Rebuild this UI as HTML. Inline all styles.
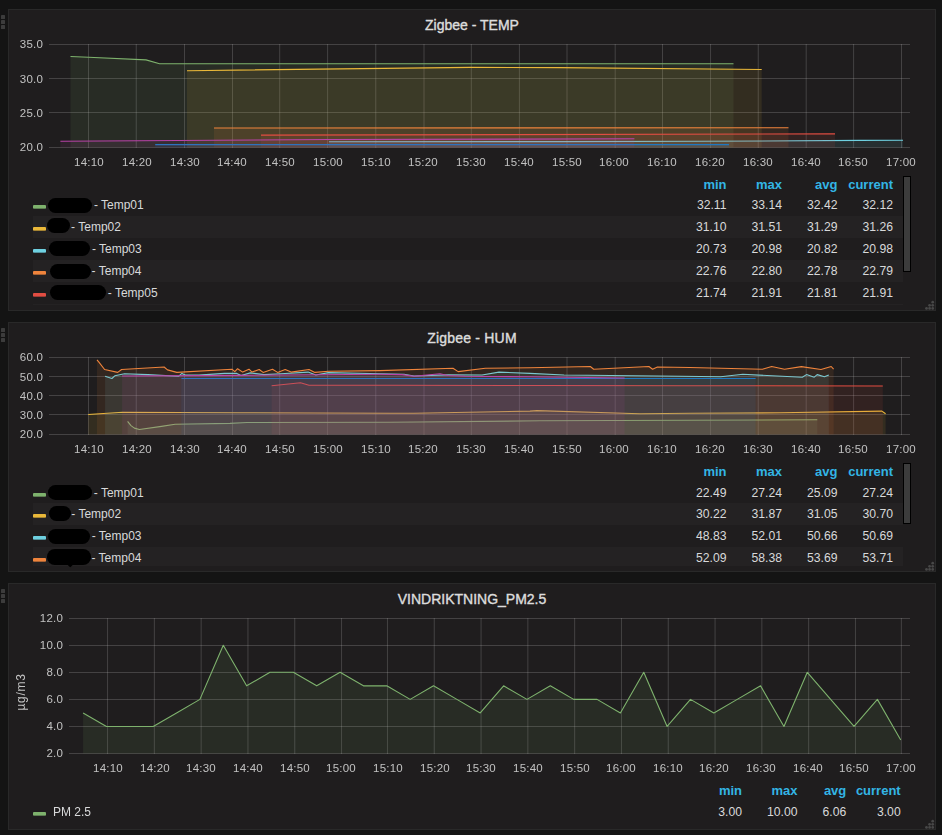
<!DOCTYPE html>
<html lang="en"><head><meta charset="utf-8"><title>Zigbee dashboard</title>
<style>
html,body{margin:0;padding:0}
body{width:942px;height:835px;background:#141414;position:relative;overflow:hidden;
 font-family:"Liberation Sans",sans-serif;color:#d8d9da}
div{position:absolute;box-sizing:border-box;white-space:nowrap}
svg{position:absolute;left:0;top:0}
.panel{left:8px;width:928px;background:#1f1d1e;border:1px solid #292929}
.dot{left:1px;width:4px;height:4px;background:#3c3c3c;border-radius:0.6px}
.title{left:8px;width:928px;text-align:center;font-size:14px;line-height:20px;color:#dcdcdc;-webkit-text-stroke:0.4px #dcdcdc}
.tick{font-size:11.5px;line-height:13px;color:#c2c2c2;width:60px;will-change:transform;letter-spacing:0.2px}
.xt{text-align:center}
.yt{text-align:right}
.ylab{width:100px;height:16px;line-height:16px;text-align:center;font-size:12px;letter-spacing:0.7px;color:#c2c2c2;transform:rotate(-90deg)}
.lh{width:80px;text-align:right;font-size:13px;line-height:20px;font-weight:bold;color:#33b5e5}
.lv{width:80px;text-align:right;font-size:12.2px;line-height:20px}
.lt{font-size:12px;line-height:20px}
.sw{left:33px;width:13px;height:4px;border-radius:1px}
.blob{background:#000}
.stripe{left:33px;background:#242223}
.sb{left:903px;width:8px;background:#3c3c3c;border:1px solid #000}
</style></head>
<body>
<div class="panel" style="top:9px;height:302px"></div>
<div class="panel" style="top:322px;height:250px"></div>
<div class="panel" style="top:583px;height:247px"></div>
<svg width="942" height="835" viewBox="0 0 942 835">
<path d="M49 44.5H910M49 78.5H910M49 112.5H910M49 147.5H910M88.5 44V148M136.25 44V148M184.5 44V148M232.5 44V148M279.7 44V148M327.6 44V148M375.75 44V148M424 44V148M471.3 44V148M519.4 44V148M567 44V148M615.2 44V148M662.5 44V148M710.55 44V148M758.25 44V148M806.2 44V148M853.6 44V148M901.5 44V148" stroke="rgba(200,200,200,0.22)" stroke-width="1" fill="none"/>
<polygon points="70.5,147.5 70.5,56.5 88.5,57.3 146,59.9 159.6,63.8 733.5,63.8 733.5,147.5" fill="#7EB26D" fill-opacity="0.1"/>
<polyline points="70.5,56.5 88.5,57.3 146,59.9 159.6,63.8 733.5,63.8" fill="none" stroke="#7EB26D" stroke-width="1.1" stroke-linejoin="round"/>
<polygon points="187,147.5 187,70.7 470,67.4 560,67.6 761.7,69.5 761.7,147.5" fill="#EAB839" fill-opacity="0.1"/>
<polyline points="187,70.7 470,67.4 560,67.6 761.7,69.5" fill="none" stroke="#EAB839" stroke-width="1.1" stroke-linejoin="round"/>
<polygon points="329,147.5 329,141.8 560,141.6 700,141.3 860,140.4 903,140.2 903,147.5" fill="#6ED0E0" fill-opacity="0.1"/>
<polyline points="329,141.8 560,141.6 700,141.3 860,140.4 903,140.2" fill="none" stroke="#6ED0E0" stroke-width="1.1" stroke-linejoin="round"/>
<polygon points="214,147.5 214,128 788.5,127.8 788.5,147.5" fill="#EF843C" fill-opacity="0.1"/>
<polyline points="214,128 788.5,127.8" fill="none" stroke="#EF843C" stroke-width="1.1" stroke-linejoin="round"/>
<polygon points="261,147.5 261,135.1 835,133.9 835,147.5" fill="#E24D42" fill-opacity="0.1"/>
<polyline points="261,135.1 835,133.9" fill="none" stroke="#E24D42" stroke-width="1.1" stroke-linejoin="round"/>
<polygon points="155.2,147.5 155.2,144.6 729,144.6 729,147.5" fill="#1F78C1" fill-opacity="0.1"/>
<polyline points="155.2,144.6 729,144.6" fill="none" stroke="#1F78C1" stroke-width="1.1" stroke-linejoin="round"/>
<polygon points="60.4,147.5 60.4,141.3 330,139.5 634.4,138.8 634.4,147.5" fill="#BA43A9" fill-opacity="0.1"/>
<polyline points="60.4,141.3 330,139.5 634.4,138.8" fill="none" stroke="#BA43A9" stroke-width="1.1" stroke-linejoin="round"/>
<path d="M49 357.5H910M49 376.5H910M49 395.5H910M49 414.5H910M49 434.5H910M88.5 357V435M136.25 357V435M184.5 357V435M232.5 357V435M279.7 357V435M327.6 357V435M375.75 357V435M424 357V435M471.3 357V435M519.4 357V435M567 357V435M615.2 357V435M662.5 357V435M710.55 357V435M758.25 357V435M806.2 357V435M853.6 357V435M901.5 357V435" stroke="rgba(200,200,200,0.22)" stroke-width="1" fill="none"/>
<polygon points="127.6,434.5 127.6,421.3 131,425.6 134.4,428.1 139.4,429.5 161.5,426.4 175.1,424.2 230,423.4 247,422.5 390,422.2 540,420.8 690,420.3 817.3,419.8 817.3,434.5" fill="#7EB26D" fill-opacity="0.1"/>
<polyline points="127.6,421.3 131,425.6 134.4,428.1 139.4,429.5 161.5,426.4 175.1,424.2 230,423.4 247,422.5 390,422.2 540,420.8 690,420.3 817.3,419.8" fill="none" stroke="#7EB26D" stroke-width="1.1" stroke-linejoin="round"/>
<polygon points="88.2,434.5 88.2,414.5 122.5,412.3 240,412.7 390,413.3 414,413.3 530,411.1 537,410.6 640,413.7 690,413.3 780,412.8 881.9,411.1 885.6,413.7 885.6,434.5" fill="#EAB839" fill-opacity="0.1"/>
<polyline points="88.2,414.5 122.5,412.3 240,412.7 390,413.3 414,413.3 530,411.1 537,410.6 640,413.7 690,413.3 780,412.8 881.9,411.1 885.6,413.7" fill="none" stroke="#EAB839" stroke-width="1.1" stroke-linejoin="round"/>
<polygon points="105.1,434.5 105.1,376.3 111.9,378.5 114.8,375.8 124.5,373.8 147.9,374.6 178.5,376.3 181.9,373.4 185.3,375.1 198.9,375.1 224.4,373.4 236.8,373.4 241,375.5 250.4,372.9 264,374.6 281,373.8 308.1,372.1 315.8,375 328.5,372.6 380,373.7 404,374.3 414,376 448,374.9 482,375 499,372.1 530,373.4 564,375 680,376.3 720.8,376.7 742.8,374.3 802.3,377.2 806.5,374.6 814.2,377.2 817.2,374.6 824.4,376.8 828.8,375 828.8,434.5" fill="#6ED0E0" fill-opacity="0.1"/>
<polyline points="105.1,376.3 111.9,378.5 114.8,375.8 124.5,373.8 147.9,374.6 178.5,376.3 181.9,373.4 185.3,375.1 198.9,375.1 224.4,373.4 236.8,373.4 241,375.5 250.4,372.9 264,374.6 281,373.8 308.1,372.1 315.8,375 328.5,372.6 380,373.7 404,374.3 414,376 448,374.9 482,375 499,372.1 530,373.4 564,375 680,376.3 720.8,376.7 742.8,374.3 802.3,377.2 806.5,374.6 814.2,377.2 817.2,374.6 824.4,376.8 828.8,375" fill="none" stroke="#6ED0E0" stroke-width="1.1" stroke-linejoin="round"/>
<polygon points="97,434.5 97,359.9 98.7,361.9 104.6,369.5 117.7,372.4 121.6,369.5 164.1,367 167.5,369.9 176.8,372.4 232,369.2 234.8,371.7 237.6,368.7 242.7,372.1 249,369.2 252,372.1 259.2,369.5 263.1,372.4 272.5,369.2 277.6,372.4 285.2,369.5 291.1,372.1 309,369.5 314.9,372.4 328.5,371.2 380,370.6 453,368.2 458.1,371.6 485.3,368.3 530,367.8 590.3,366.5 593.7,369.2 648.9,366.5 652.6,369.2 657.4,367 690,367.5 762.4,369.2 771.7,366.5 784.5,369.2 801.4,366.6 821,369.5 831.2,366.5 833.6,369.2 833.6,434.5" fill="#EF843C" fill-opacity="0.1"/>
<polyline points="97,359.9 98.7,361.9 104.6,369.5 117.7,372.4 121.6,369.5 164.1,367 167.5,369.9 176.8,372.4 232,369.2 234.8,371.7 237.6,368.7 242.7,372.1 249,369.2 252,372.1 259.2,369.5 263.1,372.4 272.5,369.2 277.6,372.4 285.2,369.5 291.1,372.1 309,369.5 314.9,372.4 328.5,371.2 380,370.6 453,368.2 458.1,371.6 485.3,368.3 530,367.8 590.3,366.5 593.7,369.2 648.9,366.5 652.6,369.2 657.4,367 690,367.5 762.4,369.2 771.7,366.5 784.5,369.2 801.4,366.6 821,369.5 831.2,366.5 833.6,369.2" fill="none" stroke="#EF843C" stroke-width="1.1" stroke-linejoin="round"/>
<polygon points="271.6,434.5 271.6,385.7 300.5,382.8 309,385.3 390,385.3 540,385.5 690,385.7 882.8,386 882.8,434.5" fill="#E24D42" fill-opacity="0.1"/>
<polyline points="271.6,385.7 300.5,382.8 309,385.3 390,385.3 540,385.5 690,385.7 882.8,386" fill="none" stroke="#E24D42" stroke-width="1.1" stroke-linejoin="round"/>
<polygon points="181.4,434.5 181.4,378.5 755.6,378.5 755.6,434.5" fill="#1F78C1" fill-opacity="0.1"/>
<polyline points="181.4,378.5 755.6,378.5" fill="none" stroke="#1F78C1" stroke-width="1.1" stroke-linejoin="round"/>
<polygon points="122.1,434.5 122.1,376 240,375.4 380,374.3 402,374.6 414,376.3 440,373.8 448,375.5 465,376.3 530,376.8 624.6,378 624.6,434.5" fill="#BA43A9" fill-opacity="0.1"/>
<polyline points="122.1,376 240,375.4 380,374.3 402,374.6 414,376.3 440,373.8 448,375.5 465,376.3 530,376.8 624.6,378" fill="none" stroke="#BA43A9" stroke-width="1.1" stroke-linejoin="round"/>
<path d="M69 618.5H910M69 645.5H910M69 672.5H910M69 699.5H910M69 726.5H910M69 753.5H910M107.55 618V754M154.35 618V754M201.15 618V754M247.95 618V754M294.75 618V754M341.55 618V754M387.45 618V754M434.25 618V754M481.05 618V754M527.85 618V754M574.65 618V754M621.45 618V754M668.25 618V754M715.05 618V754M761.85 618V754M808.65 618V754M855.45 618V754M901.35 618V754" stroke="rgba(200,200,200,0.22)" stroke-width="1" fill="none"/>
<polygon points="83.1,753.5 83.1,712.91 106.46,726.44 129.82,726.44 153.18,726.44 176.54,712.91 199.91,699.38 223.27,645.26 246.63,685.85 269.99,672.32 293.35,672.32 316.71,685.85 340.07,672.32 363.43,685.85 386.79,685.85 410.16,699.38 433.52,685.85 456.88,699.38 480.24,712.91 503.6,685.85 526.96,699.38 550.32,685.85 573.68,699.38 597.04,699.38 620.41,712.91 643.77,672.32 667.13,726.44 690.49,699.38 713.85,712.91 737.21,699.38 760.57,685.85 783.93,726.44 807.29,672.32 830.66,699.38 854.02,726.44 877.38,699.38 900.74,739.97 900.74,753.5" fill="#7EB26D" fill-opacity="0.1"/>
<polyline points="83.1,712.91 106.46,726.44 129.82,726.44 153.18,726.44 176.54,712.91 199.91,699.38 223.27,645.26 246.63,685.85 269.99,672.32 293.35,672.32 316.71,685.85 340.07,672.32 363.43,685.85 386.79,685.85 410.16,699.38 433.52,685.85 456.88,699.38 480.24,712.91 503.6,685.85 526.96,699.38 550.32,685.85 573.68,699.38 597.04,699.38 620.41,712.91 643.77,672.32 667.13,726.44 690.49,699.38 713.85,712.91 737.21,699.38 760.57,685.85 783.93,726.44 807.29,672.32 830.66,699.38 854.02,726.44 877.38,699.38 900.74,739.97" fill="none" stroke="#7EB26D" stroke-width="1.1" stroke-linejoin="round"/>
</svg>
<div class="dot" style="top:15px"></div>
<div class="dot" style="top:20px"></div>
<div class="dot" style="top:25px"></div>
<div class="title" style="top:15px;letter-spacing:0px">Zigbee - TEMP</div>
<div class="tick xt" style="left:59.1px;top:156px">14:10</div>
<div class="tick xt" style="left:106.86px;top:156px">14:20</div>
<div class="tick xt" style="left:154.62px;top:156px">14:30</div>
<div class="tick xt" style="left:202.38px;top:156px">14:40</div>
<div class="tick xt" style="left:250.14px;top:156px">14:50</div>
<div class="tick xt" style="left:297.9px;top:156px">15:00</div>
<div class="tick xt" style="left:345.66px;top:156px">15:10</div>
<div class="tick xt" style="left:393.42px;top:156px">15:20</div>
<div class="tick xt" style="left:441.18px;top:156px">15:30</div>
<div class="tick xt" style="left:488.94px;top:156px">15:40</div>
<div class="tick xt" style="left:536.7px;top:156px">15:50</div>
<div class="tick xt" style="left:584.46px;top:156px">16:00</div>
<div class="tick xt" style="left:632.22px;top:156px">16:10</div>
<div class="tick xt" style="left:679.98px;top:156px">16:20</div>
<div class="tick xt" style="left:727.74px;top:156px">16:30</div>
<div class="tick xt" style="left:775.5px;top:156px">16:40</div>
<div class="tick xt" style="left:823.26px;top:156px">16:50</div>
<div class="tick xt" style="left:871.02px;top:156px">17:00</div>
<div class="tick yt" style="left:-17px;top:37.5px">35.0</div>
<div class="tick yt" style="left:-17px;top:72.5px">30.0</div>
<div class="tick yt" style="left:-17px;top:106.5px">25.0</div>
<div class="tick yt" style="left:-17px;top:140.5px">20.0</div>
<div class="lh" style="left:646.5px;top:174.5px">min</div>
<div class="lh" style="left:702px;top:174.5px">max</div>
<div class="lh" style="left:757.5px;top:174.5px">avg</div>
<div class="lh" style="left:813px;top:174.5px">current</div>
<div class="sw" style="top:205px;background:linear-gradient(to bottom,#7EB26D 0,#7EB26D 3px,#7EB26Da6 3px,#7EB26Da6 4px)"></div>
<div class="blob" style="left:47.9px;top:197.9px;width:44px;height:14.9px;border-radius:7.45px"></div>
<div class="lt" style="left:93.9px;top:195px">- Temp01</div>
<div class="lv" style="left:646.5px;top:195px">32.11</div>
<div class="lv" style="left:702px;top:195px">33.14</div>
<div class="lv" style="left:757.5px;top:195px">32.42</div>
<div class="lv" style="left:813px;top:195px">32.12</div>
<div class="stripe" style="top:216px;height:22px;width:870px"></div>
<div class="sw" style="top:227px;background:linear-gradient(to bottom,#EAB839 0,#EAB839 3px,#EAB839a6 3px,#EAB839a6 4px)"></div>
<div class="blob" style="left:46.8px;top:217.9px;width:23px;height:15.1px;border-radius:7.55px"></div>
<div class="lt" style="left:71.1px;top:217px">- Temp02</div>
<div class="lv" style="left:646.5px;top:217px">31.10</div>
<div class="lv" style="left:702px;top:217px">31.51</div>
<div class="lv" style="left:757.5px;top:217px">31.29</div>
<div class="lv" style="left:813px;top:217px">31.26</div>
<div class="sw" style="top:249px;background:linear-gradient(to bottom,#6ED0E0 0,#6ED0E0 3px,#6ED0E0a6 3px,#6ED0E0a6 4px)"></div>
<div class="blob" style="left:48.9px;top:240.9px;width:40.9px;height:15px;border-radius:7.5px"></div>
<div class="lt" style="left:91.9px;top:239px">- Temp03</div>
<div class="lv" style="left:646.5px;top:239px">20.73</div>
<div class="lv" style="left:702px;top:239px">20.98</div>
<div class="lv" style="left:757.5px;top:239px">20.82</div>
<div class="lv" style="left:813px;top:239px">20.98</div>
<div class="stripe" style="top:260px;height:22px;width:870px"></div>
<div class="sw" style="top:271px;background:linear-gradient(to bottom,#EF843C 0,#EF843C 3px,#EF843Ca6 3px,#EF843Ca6 4px)"></div>
<div class="blob" style="left:49.8px;top:263.7px;width:41px;height:15.3px;border-radius:7.65px"></div>
<div class="lt" style="left:91.6px;top:261px">- Temp04</div>
<div class="lv" style="left:646.5px;top:261px">22.76</div>
<div class="lv" style="left:702px;top:261px">22.80</div>
<div class="lv" style="left:757.5px;top:261px">22.78</div>
<div class="lv" style="left:813px;top:261px">22.79</div>
<div class="sw" style="top:293px;background:linear-gradient(to bottom,#E24D42 0,#E24D42 3px,#E24D42a6 3px,#E24D42a6 4px)"></div>
<div class="blob" style="left:49.8px;top:284.8px;width:56.4px;height:15.1px;border-radius:7.55px"></div>
<div class="lt" style="left:107.8px;top:283px">- Temp05</div>
<div class="lv" style="left:646.5px;top:283px">21.74</div>
<div class="lv" style="left:702px;top:283px">21.91</div>
<div class="lv" style="left:757.5px;top:283px">21.81</div>
<div class="lv" style="left:813px;top:283px">21.91</div>
<div class="stripe" style="top:304px;height:1px;width:870px"></div>
<div class="sb" style="top:176px;height:96px"></div>
<div class="dot" style="top:328px"></div>
<div class="dot" style="top:333px"></div>
<div class="dot" style="top:338px"></div>
<div class="title" style="top:328px;letter-spacing:0.2px">Zigbee - HUM</div>
<div class="tick xt" style="left:59.1px;top:442.5px">14:10</div>
<div class="tick xt" style="left:106.86px;top:442.5px">14:20</div>
<div class="tick xt" style="left:154.62px;top:442.5px">14:30</div>
<div class="tick xt" style="left:202.38px;top:442.5px">14:40</div>
<div class="tick xt" style="left:250.14px;top:442.5px">14:50</div>
<div class="tick xt" style="left:297.9px;top:442.5px">15:00</div>
<div class="tick xt" style="left:345.66px;top:442.5px">15:10</div>
<div class="tick xt" style="left:393.42px;top:442.5px">15:20</div>
<div class="tick xt" style="left:441.18px;top:442.5px">15:30</div>
<div class="tick xt" style="left:488.94px;top:442.5px">15:40</div>
<div class="tick xt" style="left:536.7px;top:442.5px">15:50</div>
<div class="tick xt" style="left:584.46px;top:442.5px">16:00</div>
<div class="tick xt" style="left:632.22px;top:442.5px">16:10</div>
<div class="tick xt" style="left:679.98px;top:442.5px">16:20</div>
<div class="tick xt" style="left:727.74px;top:442.5px">16:30</div>
<div class="tick xt" style="left:775.5px;top:442.5px">16:40</div>
<div class="tick xt" style="left:823.26px;top:442.5px">16:50</div>
<div class="tick xt" style="left:871.02px;top:442.5px">17:00</div>
<div class="tick yt" style="left:-17px;top:350.5px">60.0</div>
<div class="tick yt" style="left:-17px;top:370.5px">50.0</div>
<div class="tick yt" style="left:-17px;top:389.5px">40.0</div>
<div class="tick yt" style="left:-17px;top:408.5px">30.0</div>
<div class="tick yt" style="left:-17px;top:427.5px">20.0</div>
<div class="lh" style="left:646.5px;top:462px">min</div>
<div class="lh" style="left:702px;top:462px">max</div>
<div class="lh" style="left:757.5px;top:462px">avg</div>
<div class="lh" style="left:813px;top:462px">current</div>
<div class="sw" style="top:493px;background:linear-gradient(to bottom,#7EB26D 0,#7EB26D 3px,#7EB26Da6 3px,#7EB26Da6 4px)"></div>
<div class="blob" style="left:48.1px;top:485px;width:43.9px;height:14.6px;border-radius:7.3px"></div>
<div class="lt" style="left:93.8px;top:483px">- Temp01</div>
<div class="lv" style="left:646.5px;top:483px">22.49</div>
<div class="lv" style="left:702px;top:483px">27.24</div>
<div class="lv" style="left:757.5px;top:483px">25.09</div>
<div class="lv" style="left:813px;top:483px">27.24</div>
<div class="stripe" style="top:503px;height:22px;width:870px"></div>
<div class="sw" style="top:514px;background:linear-gradient(to bottom,#EAB839 0,#EAB839 3px,#EAB839a6 3px,#EAB839a6 4px)"></div>
<div class="blob" style="left:49px;top:506.1px;width:21.6px;height:14.9px;border-radius:7.45px"></div>
<div class="lt" style="left:71.3px;top:504px">- Temp02</div>
<div class="lv" style="left:646.5px;top:504px">30.22</div>
<div class="lv" style="left:702px;top:504px">31.87</div>
<div class="lv" style="left:757.5px;top:504px">31.05</div>
<div class="lv" style="left:813px;top:504px">30.70</div>
<div class="sw" style="top:536px;background:linear-gradient(to bottom,#6ED0E0 0,#6ED0E0 3px,#6ED0E0a6 3px,#6ED0E0a6 4px)"></div>
<div class="blob" style="left:48.1px;top:528.8px;width:41.9px;height:15px;border-radius:7.5px"></div>
<div class="lt" style="left:91.7px;top:526px">- Temp03</div>
<div class="lv" style="left:646.5px;top:526px">48.83</div>
<div class="lv" style="left:702px;top:526px">52.01</div>
<div class="lv" style="left:757.5px;top:526px">50.66</div>
<div class="lv" style="left:813px;top:526px">50.69</div>
<div class="stripe" style="top:547px;height:19px;width:870px"></div>
<div class="sw" style="top:558px;background:linear-gradient(to bottom,#EF843C 0,#EF843C 3px,#EF843Ca6 3px,#EF843Ca6 4px)"></div>
<div class="blob" style="left:47px;top:548.9px;width:44.2px;height:15.7px;border-radius:7.85px"></div>
<div class="lt" style="left:91.5px;top:548px">- Temp04</div>
<div class="lv" style="left:646.5px;top:548px">52.09</div>
<div class="lv" style="left:702px;top:548px">58.38</div>
<div class="lv" style="left:757.5px;top:548px">53.69</div>
<div class="lv" style="left:813px;top:548px">53.71</div>
<div class="blob" style="left:67.2px;top:559px;width:6.5px;height:6.5px;border-radius:1px;transform:rotate(45deg)"></div>
<div class="sb" style="top:463px;height:61px"></div>
<div class="dot" style="top:589px"></div>
<div class="dot" style="top:594px"></div>
<div class="dot" style="top:599px"></div>
<div class="title" style="top:589px;letter-spacing:0px">VINDRIKTNING_PM2.5</div>
<div class="tick xt" style="left:77.9px;top:761.5px">14:10</div>
<div class="tick xt" style="left:124.56px;top:761.5px">14:20</div>
<div class="tick xt" style="left:171.22px;top:761.5px">14:30</div>
<div class="tick xt" style="left:217.88px;top:761.5px">14:40</div>
<div class="tick xt" style="left:264.54px;top:761.5px">14:50</div>
<div class="tick xt" style="left:311.2px;top:761.5px">15:00</div>
<div class="tick xt" style="left:357.86px;top:761.5px">15:10</div>
<div class="tick xt" style="left:404.52px;top:761.5px">15:20</div>
<div class="tick xt" style="left:451.18px;top:761.5px">15:30</div>
<div class="tick xt" style="left:497.84px;top:761.5px">15:40</div>
<div class="tick xt" style="left:544.5px;top:761.5px">15:50</div>
<div class="tick xt" style="left:591.16px;top:761.5px">16:00</div>
<div class="tick xt" style="left:637.82px;top:761.5px">16:10</div>
<div class="tick xt" style="left:684.48px;top:761.5px">16:20</div>
<div class="tick xt" style="left:731.14px;top:761.5px">16:30</div>
<div class="tick xt" style="left:777.8px;top:761.5px">16:40</div>
<div class="tick xt" style="left:824.46px;top:761.5px">16:50</div>
<div class="tick xt" style="left:871.12px;top:761.5px">17:00</div>
<div class="tick yt" style="left:3px;top:611.5px">12.0</div>
<div class="tick yt" style="left:3px;top:638.5px">10.0</div>
<div class="tick yt" style="left:3px;top:665.5px">8.0</div>
<div class="tick yt" style="left:3px;top:692.5px">6.0</div>
<div class="tick yt" style="left:3px;top:719.5px">4.0</div>
<div class="tick yt" style="left:3px;top:746.5px">2.0</div>
<div class="ylab" style="left:-28.8px;top:684px">µg/m3</div>
<div class="lh" style="left:662px;top:781px">min</div>
<div class="lh" style="left:717.5px;top:781px">max</div>
<div class="lh" style="left:766.3px;top:781px">avg</div>
<div class="lh" style="left:820.7px;top:781px">current</div>
<div class="sw" style="top:812px;background:linear-gradient(to bottom,#7EB26D 0,#7EB26D 3px,#7EB26Da6 3px,#7EB26Da6 4px)"></div>
<div class="lt" style="left:53px;top:802px">PM 2.5</div>
<div class="lv" style="left:662px;top:802px">3.00</div>
<div class="lv" style="left:717.5px;top:802px">10.00</div>
<div class="lv" style="left:766.3px;top:802px">6.06</div>
<div class="lv" style="left:820.7px;top:802px">3.00</div>
<svg width="942" height="835" viewBox="0 0 942 835">
<circle cx="932.7" cy="308.4" r="1.35" fill="#484848"/>
<circle cx="932.7" cy="305.3" r="1.35" fill="#484848"/>
<circle cx="932.7" cy="302.2" r="1.35" fill="#484848"/>
<circle cx="929.6" cy="308.4" r="1.35" fill="#484848"/>
<circle cx="929.6" cy="305.3" r="1.35" fill="#484848"/>
<circle cx="926.5" cy="308.4" r="1.35" fill="#484848"/>
<circle cx="932.7" cy="569.4" r="1.35" fill="#484848"/>
<circle cx="932.7" cy="566.3" r="1.35" fill="#484848"/>
<circle cx="932.7" cy="563.2" r="1.35" fill="#484848"/>
<circle cx="929.6" cy="569.4" r="1.35" fill="#484848"/>
<circle cx="929.6" cy="566.3" r="1.35" fill="#484848"/>
<circle cx="926.5" cy="569.4" r="1.35" fill="#484848"/>
<circle cx="932.7" cy="827.4" r="1.35" fill="#484848"/>
<circle cx="932.7" cy="824.3" r="1.35" fill="#484848"/>
<circle cx="932.7" cy="821.2" r="1.35" fill="#484848"/>
<circle cx="929.6" cy="827.4" r="1.35" fill="#484848"/>
<circle cx="929.6" cy="824.3" r="1.35" fill="#484848"/>
<circle cx="926.5" cy="827.4" r="1.35" fill="#484848"/>
</svg>
</body></html>
